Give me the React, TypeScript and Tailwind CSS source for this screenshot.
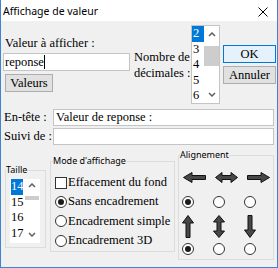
import React from 'react';

const serif = "font-['Liberation_Serif',serif] text-[12.5px] text-black";
const sans = "font-['Noto_Sans',sans-serif] text-[9px] text-black";

const Chevron = ({ down = false }: { down?: boolean }) => (
  <svg width="8" height="5" viewBox="0 0 8 5" className="block">
    <path
      d={down ? 'M1 1 L4 4 L7 1' : 'M1 4 L4 1 L7 4'}
      fill="none"
      stroke="#606060"
      strokeWidth="1.5"
    />
  </svg>
);

const Radio = ({ checked = false }: { checked?: boolean }) => (
  <span className="flex h-[12px] w-[12px] shrink-0 items-center justify-center rounded-full border border-[#333333] bg-white">
    {checked && <span className="h-[6px] w-[6px] rounded-full bg-[#1a1a1a]" />}
  </span>
);

const Arrow = ({ d, w, h }: { d: string; w: number; h: number }) => (
  <svg width={w} height={h} viewBox={`0 0 ${w} ${h}`} className="block shrink-0">
    <path d={d} fill="#474747" stroke="#111111" strokeWidth="1" strokeLinejoin="miter" />
  </svg>
);

const LEFT = 'M0.5 5.5 L9 0.5 L9 3.5 L22.5 3.5 L22.5 7.5 L9 7.5 L9 10.5 Z';
const LEFTRIGHT = 'M0.5 5.5 L7 0.5 L7 3.5 L16 3.5 L16 0.5 L22.5 5.5 L16 10.5 L16 7.5 L7 7.5 L7 10.5 Z';
const RIGHT = 'M22.5 5.5 L14 0.5 L14 3.5 L0.5 3.5 L0.5 7.5 L14 7.5 L14 10.5 Z';
const UP = 'M6 0.5 L11.5 8 L8 8 L8 22.5 L4 22.5 L4 8 L0.5 8 Z';
const UPDOWN = 'M6 0.5 L11.5 7 L8 7 L8 16 L11.5 16 L6 22.5 L0.5 16 L4 16 L4 7 L0.5 7 Z';
const DOWN = 'M6 22.5 L11.5 15 L8 15 L8 0.5 L4 0.5 L4 15 L0.5 15 Z';

export default function App() {
  const decimals = ['2', '3', '4', '5', '6'];
  const sizes = ['14', '15', '16', '17'];

  return (
    <div className="flex h-[268px] w-[278px] flex-col overflow-hidden border-x border-b border-[#3f84d0] bg-[#f0f0f0]">
      {/* Title bar */}
      <div className="flex h-[21px] shrink-0 items-center justify-between bg-white pl-[2px] pr-[9px] pt-[2px]">
        <span className="font-['Noto_Sans',sans-serif] text-[10.5px] text-black">Affichage de valeur</span>
        <svg width="10" height="10" viewBox="0 0 10 10">
          <path d="M0.5 0.5 L9.5 9.5 M9.5 0.5 L0.5 9.5" stroke="#000" strokeWidth="1" />
        </svg>
      </div>

      {/* Top section */}
      <div className="flex h-[83px] shrink-0 items-start">
        <div className="ml-[2px] flex w-[127px] flex-col">
          <div className={`${serif} mt-[15px] pl-[2px] leading-[15px]`}>Valeur à afficher :</div>
          <div className="mt-[2px] flex h-[18px] items-center border border-[#c4c4c4] bg-white pl-[1px]">
            <span className={`${serif} leading-[16px]`}>reponse</span>
            <span className="h-[14px] w-[1px] bg-black" />
          </div>
          <button className={`${serif} ml-[2px] mt-[3px] h-[18px] w-[48px] border border-[#adadad] bg-[#e1e1e1] leading-[16px]`}>
            Valeurs
          </button>
        </div>

        <div className={`${serif} ml-[4px] mt-[28px] w-[57px] whitespace-nowrap leading-[16px]`}>
          <div>Nombre de</div>
          <div>décimales :</div>
        </div>

        <div className="mt-[4px] flex h-[79px] w-[29px] border border-[#c4c4c4] bg-white">
          <div className="w-[12px]">
            {decimals.map((d, i) => (
              <div
                key={d}
                className={`${serif} h-[15.5px] pl-[1px] leading-[15.5px] ${i === 0 ? 'bg-[#0078d7] text-white' : ''}`}
              >
                {d}
              </div>
            ))}
          </div>
          <div className="flex w-[15px] flex-col items-center">
            <div className="mt-[6px]"><Chevron /></div>
            <div className="mt-[9px] h-[20px] w-[15px] bg-[#cdcdcd]" />
            <div className="mt-[26px]"><Chevron down /></div>
          </div>
        </div>

        <div className="ml-[3px] mt-[24px] flex w-[53px] flex-col">
          <button className={`${serif} h-[18px] border border-[#0078d7] bg-[#e5f1fb] leading-[16px]`}>OK</button>
          <button className={`${serif} mt-[3px] h-[18px] border border-[#adadad] bg-[#e1e1e1] leading-[16px]`}>Annuler</button>
        </div>
      </div>

      {/* En-tête / Suivi de */}
      <div className="mt-[5px] flex h-[17px] shrink-0 items-center">
        <div className={`${serif} ml-[3px] w-[49px] leading-[15px]`}>En-tête :</div>
        <div className="flex h-[17px] w-[221px] items-center border border-[#c4c4c4] bg-white pl-[2px]">
          <span className={`${serif} leading-[15px]`}>Valeur de reponse :</span>
        </div>
      </div>
      <div className="mt-[2px] flex h-[17px] shrink-0 items-center">
        <div className={`${serif} ml-[3px] w-[49px] leading-[15px]`}>Suivi de :</div>
        <div className="h-[17px] w-[221px] border border-[#c4c4c4] bg-white" />
      </div>

      {/* Groups */}
      <div className="flex items-start">
        <fieldset className="ml-[4px] mt-[19px] h-[84px] w-[41px] border border-[#dcdcdc]">
          <legend className={`${sans} leading-[12px]`}>Taille</legend>
          <div className="ml-[4px] mt-[3px] flex h-[64px] w-[30px] bg-white">
            <div className="w-[14px] pl-[1px]">
              {sizes.map((s, i) => (
                <div
                  key={s}
                  className={`${serif} h-[15.5px] w-[12px] leading-[15.5px] ${i === 0 ? 'bg-[#0078d7] text-white' : ''}`}
                >
                  {s}
                </div>
              ))}
            </div>
            <div className="flex w-[16px] flex-col items-center">
              <div className="mt-[4px]"><Chevron /></div>
              <div className="mt-[8px] h-[4px] w-[14px] bg-[#cdcdcd]" />
              <div className="mt-[32px]"><Chevron down /></div>
            </div>
          </div>
        </fieldset>

        <fieldset className="ml-[4px] mt-[10px] h-[97px] w-[125px] border border-[#dcdcdc]">
          <legend className={`${sans} ml-[2px] leading-[12px]`}>Mode d'affichage</legend>
          <div className="ml-[4px] mt-[6px] flex flex-col">
            <div className="flex h-[19.3px] items-center">
              <span className="h-[12px] w-[12px] shrink-0 border border-[#333333] bg-white" />
              <span className={`${serif} ml-[1px] leading-[15px]`}>Effacement du fond</span>
            </div>
            <div className="flex h-[19.3px] items-center">
              <Radio checked />
              <span className={`${serif} ml-[1px] leading-[15px]`}>Sans encadrement</span>
            </div>
            <div className="flex h-[19.3px] items-center">
              <Radio />
              <span className={`${serif} ml-[1px] leading-[15px]`}>Encadrement simple</span>
            </div>
            <div className="flex h-[19.3px] items-center">
              <Radio />
              <span className={`${serif} ml-[1px] leading-[15px]`}>Encadrement 3D</span>
            </div>
          </div>
        </fieldset>

        <fieldset className="ml-[3px] mt-[4px] h-[111px] w-[96px] border border-[#dcdcdc]">
          <legend className={`${sans} ml-[1px] leading-[12px]`}>Alignement</legend>
          <div className="ml-[4px] mt-[11px] flex h-[11px] items-center gap-[9px]">
            <Arrow d={LEFT} w={23} h={11} />
            <Arrow d={LEFTRIGHT} w={23} h={11} />
            <Arrow d={RIGHT} w={23} h={11} />
          </div>
          <div className="ml-[3px] mt-[13px] flex gap-[19px]">
            <Radio checked />
            <Radio />
            <Radio />
          </div>
          <div className="ml-[3px] mt-[7px] flex gap-[19px]">
            <Arrow d={UP} w={12} h={23} />
            <Arrow d={UPDOWN} w={12} h={23} />
            <Arrow d={DOWN} w={12} h={23} />
          </div>
          <div className="ml-[3px] mt-[5px] flex gap-[19px]">
            <Radio checked />
            <Radio />
            <Radio />
          </div>
        </fieldset>
      </div>
    </div>
  );
}
